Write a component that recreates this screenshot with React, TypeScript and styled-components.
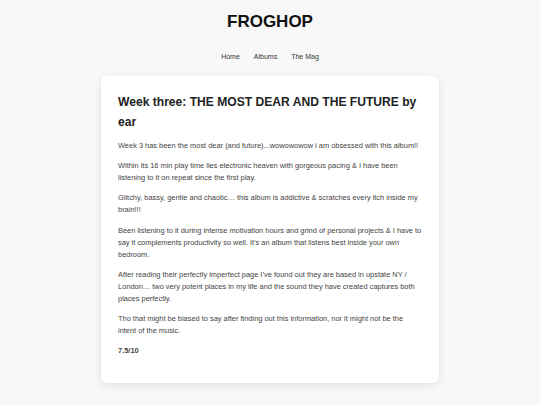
import styled, { createGlobalStyle } from 'styled-components';

const GlobalStyle = createGlobalStyle`
  html, body {
    margin: 0;
    padding: 0;
    background: #f8f8f8;
    font-family: "Liberation Sans", Arial, sans-serif;
  }
`;

const Page = styled.div`
  min-height: 405px;
  display: flex;
  flex-direction: column;
  align-items: center;
  padding-top: 12px;
  box-sizing: border-box;
`;

const Logo = styled.h1`
  margin: 0;
  font-size: 17px;
  line-height: 20px;
  font-weight: 700;
  color: #111;
`;

const Nav = styled.nav`
  display: flex;
  gap: 14px;
  margin-top: 20px;
`;

const NavLink = styled.a`
  font-size: 7px;
  line-height: 10px;
  color: #333;
  text-decoration: none;
`;

const Card = styled.article`
  width: 338px;
  box-sizing: border-box;
  margin-top: 14px;
  padding: 16px 17px 18px;
  background: #fff;
  border-radius: 6px;
  box-shadow: 0 2px 8px rgba(0, 0, 0, 0.1);
`;

const Heading = styled.h2`
  margin: 0 0 8px;
  font-size: 12.1px;
  line-height: 20px;
  font-weight: 700;
  color: #222;
`;

const Para = styled.p<{ $bold?: boolean }>`
  margin: 0 0 8.2px;
  font-size: 7.43px;
  line-height: 12px;
  color: #444;
  font-weight: ${props => (props.$bold ? 700 : 400)};
`;

const paragraphs = [
  'Week 3 has been the most dear (and future)...wowowowow i am obsessed with this album!!',
  'Within its 16 min play time lies electronic heaven with gorgeous pacing & I have been listening to it on repeat since the first play.',
  'Glitchy, bassy, gentle and chaotic… this album is addictive & scratches every itch inside my brain!!!',
  "Been listening to it during intense motivation hours and grind of personal projects & I have to say it complements productivity so well. It's an album that listens best inside your own bedroom.",
  'After reading their perfectly imperfect page I’ve found out they are based in upstate NY / London… two very potent places in my life and the sound they have created captures both places perfectly.',
  'Tho that might be biased to say after finding out this information, nor it might not be the intent of the music.',
];

export default function App() {
  return (
    <>
      <GlobalStyle />
      <Page>
        <Logo>FROGHOP</Logo>
        <Nav>
          <NavLink href="#">Home</NavLink>
          <NavLink href="#">Albums</NavLink>
          <NavLink href="#">The Mag</NavLink>
        </Nav>
        <Card>
          <Heading>Week three: THE MOST DEAR AND THE FUTURE by ear</Heading>
          {paragraphs.map(text => (
            <Para key={text}>{text}</Para>
          ))}
          <Para $bold>7.5/10</Para>
        </Card>
      </Page>
    </>
  );
}
